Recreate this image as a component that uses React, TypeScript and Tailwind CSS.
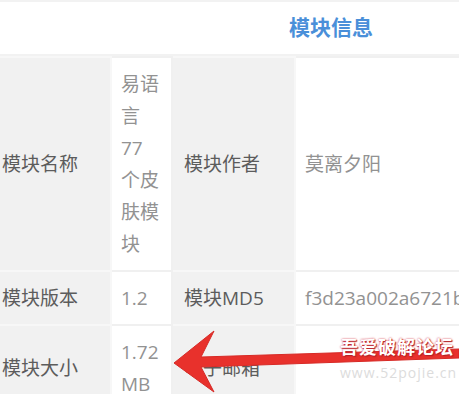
const font = { fontFamily: '"Open Sans", "Noto Sans CJK SC", sans-serif' };

function Label({ children }: { children: React.ReactNode }) {
  return (
    <td className="bg-[#f1f1f1] border-2 border-[#f7f7f7] align-middle text-[#5c5c5c] px-[11px] py-[10px]">
      {children}
    </td>
  );
}

function Value({ children, nowrap }: { children: React.ReactNode; nowrap?: boolean }) {
  return (
    <td
      className={
        "bg-white border-2 border-[#f0f0f0] align-middle text-[#929292] pl-[9px] pr-[10px] py-[10px] overflow-hidden" +
        (nowrap ? " whitespace-nowrap" : "")
      }
    >
      {children}
    </td>
  );
}

export default function App() {
  return (
    <div className="relative w-[459px] h-[394px] overflow-hidden bg-white" style={font}>
      <div className="w-[686px] -ml-[11px]">
        <div className="h-[56px] border-t-2 border-b-2 border-[#f2f2f2] flex items-center justify-center">
          <span className="text-[21px] font-bold text-[#4a8fd9] ml-[-2px]">模块信息</span>
        </div>
        <table className="table-fixed border-collapse w-full text-[19px] leading-[32px]">
          <colgroup>
            <col className="w-[121px]" />
            <col className="w-[61px]" />
            <col className="w-[123px]" />
            <col />
          </colgroup>
          <tbody>
            <tr>
              <Label>模块名称</Label>
              <Value>易语言77个皮肤模块</Value>
              <Label>模块作者</Label>
              <Value>莫离夕阳</Value>
            </tr>
            <tr>
              <Label>模块版本</Label>
              <Value>1.2</Value>
              <Label>模块MD5</Label>
              <Value nowrap>f3d23a002a6721b0c4e8d9a3</Value>
            </tr>
            <tr>
              <Label>模块大小</Label>
              <Value>1.72 MB</Value>
              <Label>电子邮箱</Label>
              <Value> </Value>
            </tr>
          </tbody>
        </table>
      </div>

      <svg className="absolute left-0 top-0" width="459" height="394" viewBox="0 0 459 394">
        <polygon
          points="174,363 214,331 201,357 459,349 459,358 201,367 214,392"
          fill="#e8312c"
          stroke="#d62a26"
          strokeWidth="1"
          strokeLinejoin="round"
        />
      </svg>

      <div className="absolute left-[340px] top-[338px] flex flex-col items-start leading-none">
        <span
          className="text-[18px] font-bold text-white tracking-[1px]"
          style={{ textShadow: "0 0 2px #c23, 1px 1px 1px #a22" }}
        >
          吾爱破解论坛
        </span>
        <span
          className="mt-[10px] text-[14px] text-[#dcdcdc] tracking-[1px]"
          style={{ textShadow: "1px 1px 1px #fff" }}
        >
          www.52pojie.cn
        </span>
      </div>
    </div>
  );
}
